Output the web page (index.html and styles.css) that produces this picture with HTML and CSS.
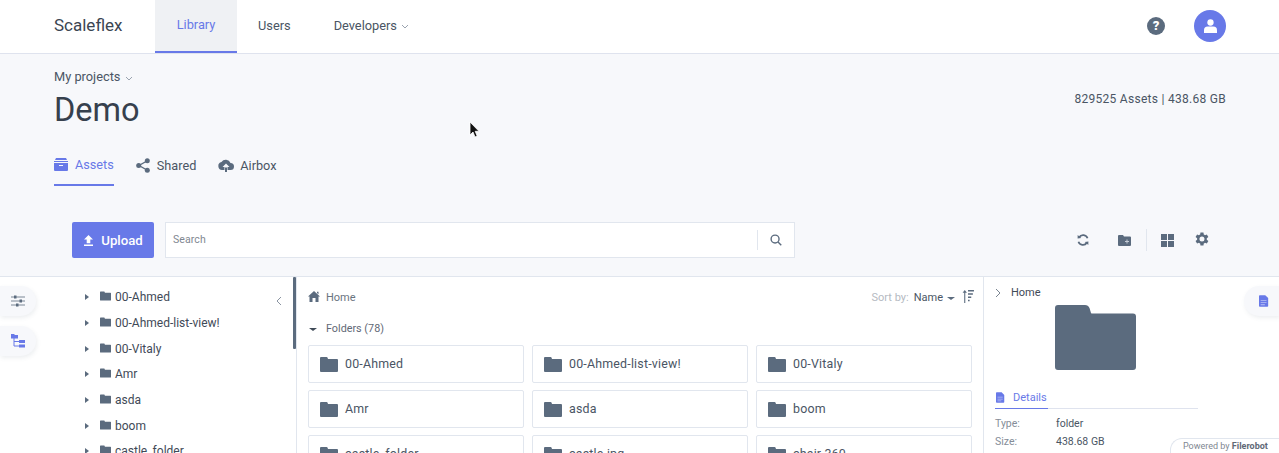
FILE: index.html
```html
<!DOCTYPE html>
<html lang="en">
<head>
<meta charset="utf-8">
<title>Scaleflex</title>
<link rel="stylesheet" href="styles.css">
</head>
<body>
<svg class="defs" width="0" height="0" aria-hidden="true">
  <symbol id="folder" viewBox="0 0 18 15"><path d="M0 1a1 1 0 0 1 1-1h5.600a1 1 0 0 1 .9.600L8 2h9a1 1 0 0 1 1 1v11a1 1 0 0 1-1 1H1a1 1 0 0 1-1-1z"/></symbol>
  <symbol id="doc" viewBox="0 0 12 14"><path d="M1 0h6.500L11 3.500V13a1 1 0 0 1-1 1H1a1 1 0 0 1-1-1V1a1 1 0 0 1 1-1z"/><path fill="#fff" fill-opacity=".55" d="M2 6h7v1H2zM2 8.500h7v1H2zM2 11h5v1H2z"/></symbol>
</svg>
<header class="topbar">
  <div class="logo">Scaleflex</div>
  <nav class="nav">
    <a class="nav-item active">Library</a>
    <a class="nav-item">Users</a>
    <a class="nav-item dev">Developers <svg class="chev" viewBox="0 0 8 5"><path d="M1 1l3 3 3-3"/></svg></a>
  </nav>
  <div class="top-right">
    <div class="help">?</div>
    <div class="avatar"><svg viewBox="0 0 14 15" width="13" height="14"><circle cx="7" cy="3.700" r="3.400"/><path d="M0 15v-3a4 4 0 0 1 4-4h6a4 4 0 0 1 4 4v3z"/></svg></div>
  </div>
</header>
<section class="hero">
  <div class="hero-text">
    <div class="projects">My projects <svg class="chev" viewBox="0 0 8 5"><path d="M1 1l3 3 3-3"/></svg></div>
    <h1>Demo</h1>
    <div class="tabs">
      <a class="tab active"><svg viewBox="0 0 14 13" width="14" height="13"><path d="M2 0h10l1 2H1z"/><path d="M0 3h14v1H0z"/><path d="M0 5h14v7a1 1 0 0 1-1 1H1a1 1 0 0 1-1-1zM5 7v1h4V7z" fill-rule="evenodd"/></svg>Assets</a>
      <a class="tab"><svg viewBox="0 0 14 15" width="14" height="15"><path d="M11 3L3 7.500l8 4.500" fill="none" stroke="#5b6b7e" stroke-width="1.400"/><circle cx="11.300" cy="2.700" r="2.500"/><circle cx="2.700" cy="7.500" r="2.500"/><circle cx="11.300" cy="12.300" r="2.500"/></svg>Shared</a>
      <a class="tab"><svg viewBox="0 0 16 13" width="16" height="13"><path d="M4 11a4 4 0 0 1-.5-7.900A5 5 0 0 1 12.500 4 3.500 3.500 0 0 1 12.500 11H9.500V8h2L8 4.500 4.500 8h2v3z"/><path d="M7 8.500h2V13H7z"/></svg>Airbox</a>
    </div>
  </div>
  <div class="stats">829525 Assets | 438.68 GB</div>
</section>
<section class="toolbar">
  <button class="upload"><svg viewBox="0 0 10 12" width="9" height="11"><path d="M5 0l5 5H7v4H3V5H0zM0 10.500h10V12H0z"/></svg>Upload</button>
  <div class="search">
    <span class="search-ph">Search</span>
    <span class="search-btn"><svg viewBox="0 0 13 13" width="12" height="12"><circle cx="5.500" cy="5.500" r="4.300"/><path d="M8.700 8.700l3.500 3.500"/></svg></span>
  </div>
  <div class="actions">
    <svg class="act refresh" viewBox="0 0 14 14" width="12" height="12"><path d="M12.300 5A5.500 5.500 0 0 0 2.500 3.700"/><path d="M1.700 9a5.500 5.500 0 0 0 9.800 1.300"/><path class="fill" d="M0.800 1.200l4.200 3.400-4.300.7zM13.200 12.800l-4.200-3.400 4.300-.7z"/></svg>
    <svg class="act newfolder" viewBox="0 0 13 11" width="13" height="11"><path d="M0 1a1 1 0 0 1 1-1h4l1 1.500h6a1 1 0 0 1 1 1V10a1 1 0 0 1-1 1H1a1 1 0 0 1-1-1z"/><path fill="#c5ccd6" d="M8.500 4.500h1v1.500H11v1H9.500v1.500h-1V7H7V6h1.500z"/></svg>
    <span class="act-sep"></span>
    <svg class="act grid" viewBox="0 0 13 13" width="13" height="13"><path d="M0 0h6v6H0zM7 0h6v6H7zM0 7h6v6H0zM7 7h6v6H7z"/></svg>
    <svg class="act gear" viewBox="3 2.500 19.500 19" width="14" height="14"><path d="M19.400 13a7.500 7.500 0 0 0 0-2l2.200-1.700-2.100-3.600-2.600 1a7.600 7.600 0 0 0-1.700-1L14.800 3h-4.200l-.4 2.700a7.600 7.600 0 0 0-1.700 1l-2.600-1L3.800 9.300 6 11a7.500 7.500 0 0 0 0 2l-2.200 1.700 2.100 3.600 2.600-1a7.600 7.600 0 0 0 1.700 1l.4 2.700h4.200l.4-2.700a7.600 7.600 0 0 0 1.700-1l2.600 1 2.100-3.600zM12.700 15.500a3.500 3.500 0 1 1 0-7 3.500 3.500 0 0 1 0 7z" fill-rule="evenodd"/></svg>
  </div>
</section>
<main class="workspace">
  <aside class="rail">
    <div class="rail-btn"><svg viewBox="0 0 14 12" width="14" height="12" class="sliders"><path d="M0 2h14M0 6h14M0 10h14"/><path class="knob" d="M3 .500h2.500v3H3zM8.500 4.500H11v3H8.500zM5 8.500h2.500v3H5z"/></svg></div>
    <div class="rail-btn"><svg viewBox="0 0 14 14" width="14" height="14" class="treeic"><path d="M0 0h3l1 1h3v3.500H0zM8 6h6v3H8zM8 10.500h6v3H8z"/><path d="M3 4v8h5M3 7.500h5" fill="none" stroke="#6879e8"/></svg></div>
  </aside>
  <nav class="tree">
    <svg class="collapse" viewBox="0 0 6 10"><path d="M5 1L1 5l4 4"/></svg>
    <div class="tree-row"><i class="caret"></i><svg class="tf"><use href="#folder"/></svg>00-Ahmed</div>
    <div class="tree-row"><i class="caret"></i><svg class="tf"><use href="#folder"/></svg>00-Ahmed-list-view!</div>
    <div class="tree-row"><i class="caret"></i><svg class="tf"><use href="#folder"/></svg>00-Vitaly</div>
    <div class="tree-row"><i class="caret"></i><svg class="tf"><use href="#folder"/></svg>Amr</div>
    <div class="tree-row"><i class="caret"></i><svg class="tf"><use href="#folder"/></svg>asda</div>
    <div class="tree-row"><i class="caret"></i><svg class="tf"><use href="#folder"/></svg>boom</div>
    <div class="tree-row"><i class="caret"></i><svg class="tf"><use href="#folder"/></svg>castle_folder</div>
    <span class="scroll-thumb"></span>
  </nav>
  <section class="content">
    <div class="crumbs">
      <span class="home"><svg viewBox="0 0 12 11" width="12" height="11"><path d="M6 0l6 5.500h-1.500V11H7.500V7h-3v4H1.500V5.500H0zM9 .800h1.500v2.500L9 2z"/></svg>Home</span>
      <span class="sort"><span class="sort-l">Sort by:</span><span class="sort-v">Name</span><i class="drop"></i>
        <svg class="sort-ic" viewBox="0 0 11 12" width="12" height="13"><path d="M2.500 0l2 2.500H3V12H2V2.500H.5z"/><path d="M5.500 0H11v1.300H5.500zM5.500 3H10v1.300H5.500zM5.500 6h3v1.300h-3zM5.500 9H7v1.300H5.500z"/></svg>
      </span>
    </div>
    <div class="folders-h"><i class="drop dark"></i>Folders (78)</div>
    <div class="cards">
      <div class="card"><svg class="cf"><use href="#folder"/></svg>00-Ahmed</div>
      <div class="card"><svg class="cf"><use href="#folder"/></svg>00-Ahmed-list-view!</div>
      <div class="card"><svg class="cf"><use href="#folder"/></svg>00-Vitaly</div>
      <div class="card"><svg class="cf"><use href="#folder"/></svg>Amr</div>
      <div class="card"><svg class="cf"><use href="#folder"/></svg>asda</div>
      <div class="card"><svg class="cf"><use href="#folder"/></svg>boom</div>
      <div class="card"><svg class="cf"><use href="#folder"/></svg>castle_folder</div>
      <div class="card"><svg class="cf"><use href="#folder"/></svg>castle.jpg</div>
      <div class="card"><svg class="cf"><use href="#folder"/></svg>chair 360</div>
    </div>
  </section>
  <aside class="details">
    <div class="det-head"><svg class="det-chev" viewBox="0 0 6 10"><path d="M1 1l4 4-4 4"/></svg>Home</div>
    <svg class="big-folder" viewBox="0 0 81 65"><path d="M0 3a3 3 0 0 1 3-3h27a5 5 0 0 1 4.500 3l1.500 5 .5.500H78a3 3 0 0 1 3 3V62a3 3 0 0 1-3 3H3a3 3 0 0 1-3-3z"/></svg>
    <div class="det-tabs"><span class="det-tab"><svg class="doc"><use href="#doc"/></svg>Details</span></div>
    <dl class="props">
      <dt>Type:</dt><dd>folder</dd>
      <dt>Size:</dt><dd>438.68 GB</dd>
    </dl>
  </aside>
  <div class="rail-btn right"><svg class="doc2"><use href="#doc"/></svg></div>
  <div class="powered">Powered by <b>Filerobot</b></div>
</main>
<svg class="cursor" viewBox="0 0 11 17" width="11" height="17"><path d="M1 1v13l3-3 2 5 2.200-.9-2-4.800H10z" fill="#111" stroke="#fff" stroke-width=".8"/></svg>
</body>
</html>
```
FILE: styles.css
```css
* { box-sizing: border-box; }
html, body { margin: 0; height: 453px; overflow: hidden; }
body { position: relative; background: #f7f8fb; font-family: Roboto, "Liberation Sans", sans-serif; color: #4a5564; font-size: 12px; }
.defs { position: absolute; }
a { color: inherit; text-decoration: none; }

.topbar { height: 54px; background: #fff; border-bottom: 1px solid #dfe3ee; display: flex; align-items: stretch; padding-left: 54px; padding-right: 53px; }
.logo { font-size: 17px; line-height: 51px; color: #3b4552; width: 101px; }
.nav { display: flex; }
.nav-item { display: flex; align-items: center; justify-content: center; font-size: 12.800px; color: #4a5564; height: 53px; padding-bottom: 2px; }
.nav-item.active { width: 82px; background: #eff1f4; color: #6879e8; border-bottom: 2px solid #6879e8; }
.nav-item:nth-child(2) { margin-left: 21px; }
.nav-item.dev { margin-left: 43px; gap: 4px; }
.chev { width: 8px; height: 5px; fill: none; stroke: #9aa3af; stroke-width: 1; margin-top: 2px; }
.top-right { margin-left: auto; display: flex; align-items: center; gap: 29px; padding-bottom: 1px; }
.help { width: 18px; height: 18px; border-radius: 50%; background: #5b6b7e; color: #fff; font-weight: 900; font-size: 13px; line-height: 18px; text-align: center; }
.avatar { width: 32px; height: 32px; border-radius: 50%; background: #6879e8; display: flex; align-items: center; justify-content: center; }
.avatar svg { fill: #fff; }

.hero { height: 162px; padding: 15px 53px 0 54px; display: flex; justify-content: space-between; }
.projects { font-size: 12.800px; line-height: 16px; color: #4a5564; display: flex; align-items: center; gap: 5px; }
h1 { margin: 6px 0 0; font-size: 32.500px; font-weight: 400; line-height: 38px; color: #36404d; }
.tabs { display: flex; gap: 22px; margin-top: 26px; }
.tab { display: flex; align-items: center; gap: 7px; height: 31px; font-size: 12.700px; color: #4a5564; padding-bottom: 11px; }
.tab svg { fill: #5b6b7e; }
.tab:last-child { gap: 6px; }
.tab.active { color: #6879e8; border-bottom: 2px solid #6879e8; }
.tab.active svg { fill: #6879e8; }
.stats { font-size: 12px; line-height: 14px; margin-top: 23px; color: #4a5564; letter-spacing: .28px; }

.toolbar { height: 60px; padding: 6px 70px 0 72px; display: flex; align-items: flex-start; }
.upload { width: 82px; height: 36px; background: #6879e8; color: #fff; border: 0; border-radius: 2px; font: 500 13.200px Roboto, sans-serif; display: flex; align-items: center; justify-content: center; gap: 8px; padding: 0 0 0 1px; }
.upload svg { fill: #fff; }
.search { margin-left: 11px; width: 630px; height: 36px; background: #fff; border: 1px solid #e1e6ee; display: flex; align-items: center; justify-content: space-between; }
.search-ph { padding-left: 7px; font-size: 10.500px; color: #7f8791; padding-bottom: 1px; letter-spacing: .1px; }
.search-btn { width: 37px; height: 20px; border-left: 1px solid #e1e6ee; display: flex; align-items: center; justify-content: center; }
.search-btn svg { fill: none; stroke: #5b6b7e; stroke-width: 1.500; }
.actions { margin-left: auto; display: flex; align-items: center; height: 36px; }
.act { fill: #5b6b7e; display: block; }
.refresh { fill: none; stroke: #5b6b7e; stroke-width: 2; margin-right: 29px; }
.refresh .fill { fill: #5b6b7e; stroke: none; }
.newfolder { margin-right: 15px; }
.act-sep { width: 1px; height: 22px; background: #e1e6ee; margin-right: 14px; }
.grid { margin-right: 21px; }
.gear { margin-top: -2px; }

.workspace { position: relative; height: 177px; background: #fff; border-top: 1px solid #e1e6ee; display: flex; overflow: hidden; }
.rail { width: 36px; padding-top: 9px; display: flex; flex-direction: column; gap: 10px; flex: none; }
.rail-btn { width: 36px; height: 30px; background: #f7f8fb; border-radius: 0 15px 15px 0; box-shadow: 1px 2px 4px rgba(80, 95, 120, .1); display: flex; align-items: center; justify-content: center; }
.sliders { fill: none; stroke: #5b6b7e; stroke-width: .8; }
.sliders .knob { fill: #5b6b7e; stroke: none; }
.treeic { fill: #6879e8; }
.tree { position: relative; width: 261px; flex: none; border-right: 1px solid #e1e6ee; padding: 7.500px 0 0 49px; }
.tree-row { display: flex; align-items: center; height: 25.700px; font-size: 12px; color: #3f4a57; font-weight: 400; white-space: nowrap; }
.caret { width: 0; height: 0; border-left: 4px solid #5b6b7e; border-top: 3.500px solid transparent; border-bottom: 3.500px solid transparent; margin-right: 11px; }
.tf { width: 11px; height: 10px; fill: #5b6b7e; margin-right: 4px; margin-top: -2px; }
.collapse { position: absolute; right: 14px; top: 19px; width: 6px; height: 10px; fill: none; stroke: #8a94a1; stroke-width: 1; }
.scroll-thumb { position: absolute; right: 0; top: 0; width: 3px; height: 72px; background: #5b6b7e; border-radius: 1px; }
.content { width: 687px; flex: none; padding: 0 11px; }
.crumbs { height: 42px; display: flex; justify-content: space-between; padding-top: 15px; line-height: 12px; font-size: 11px; color: #6a7480; }
.home { display: flex; gap: 6px; align-items: center; height: 12px; }
.home svg { fill: #5b6b7e; margin-top: -3px; }
.sort { display: flex; align-items: center; height: 12px; margin-right: -1px; }
.sort-l { color: #b5bac2; margin-right: 5px; }
.sort-v { color: #4a5564; margin-right: 4px; }
.drop { display: inline-block; width: 0; height: 0; border-top: 3.500px solid #5b6b7e; border-left: 4px solid transparent; border-right: 4px solid transparent; }
.sort-ic { fill: #5b6b7e; margin-left: 7px; margin-top: -4px; }
.folders-h { height: 26px; padding: 2px 0 0 1px; display: flex; align-items: flex-start; line-height: 16px; font-size: 10.800px; color: #5f6976; gap: 9px; }
.folders-h .dark { margin-top: 7px; border-top-color: #3f4a57; }
.cards { display: grid; grid-template-columns: repeat(3, 216px); grid-auto-rows: 38px; gap: 7px 8px; }
.card { border: 1px solid #e1e6ee; border-radius: 2px; display: flex; align-items: center; padding: 0 0 1px 11px; gap: 7px; font-size: 12.400px; letter-spacing: .2px; font-weight: 400; color: #4a5564; background: #fff; }
.cf { width: 18px; height: 15px; fill: #5b6b7e; margin-top: 1px; }
.details { flex: 1; border-left: 1px solid #e1e6ee; padding: 9px 0 0 11px; margin-left: -1px; }
.det-head { display: flex; align-items: center; gap: 10px; font-size: 11px; line-height: 13px; color: #3f4a57; }
.det-chev { width: 6px; height: 10px; fill: none; stroke: #7a8591; stroke-width: 1; }
.big-folder { display: block; width: 81px; height: 65px; fill: #5b6b7e; margin: 6px 0 0 60px; }
.det-tabs { width: 203px; border-bottom: 1px solid #dfe3ee; margin-top: 17px; height: 22px; }
.det-tab { display: inline-flex; align-items: center; gap: 8px; width: 53px; height: 22px; padding-left: 1px; font-size: 11px; color: #6879e8; border-bottom: 1px solid #6879e8; white-space: nowrap; }
.doc { width: 9px; height: 11px; fill: #6879e8; flex: none; }
.props { display: grid; grid-template-columns: 61px 1fr; margin: 8px 0 0; row-gap: 4px; font-size: 10.500px; line-height: 14px; }
dt { color: #858d98; }
dd { margin: 0; color: #4a5564; }
.rail-btn.right { position: absolute; right: 0; top: 9px; width: 35px; border-radius: 15px 0 0 15px; padding-left: 5px; }
.doc2 { width: 10px; height: 12px; fill: #6879e8; }
.powered { position: absolute; right: 0; bottom: 0; width: 109px; height: 15px; background: #fff; border: 1px solid #e1e6ee; border-width: 1px 0 0 1px; border-radius: 12px 0 0 0; font-size: 9px; line-height: 14px; color: #7f8791; padding-left: 12px; white-space: nowrap; }
.powered b { font-weight: 700; color: #5f6976; }
.cursor { position: absolute; left: 469px; top: 121px; }
```
